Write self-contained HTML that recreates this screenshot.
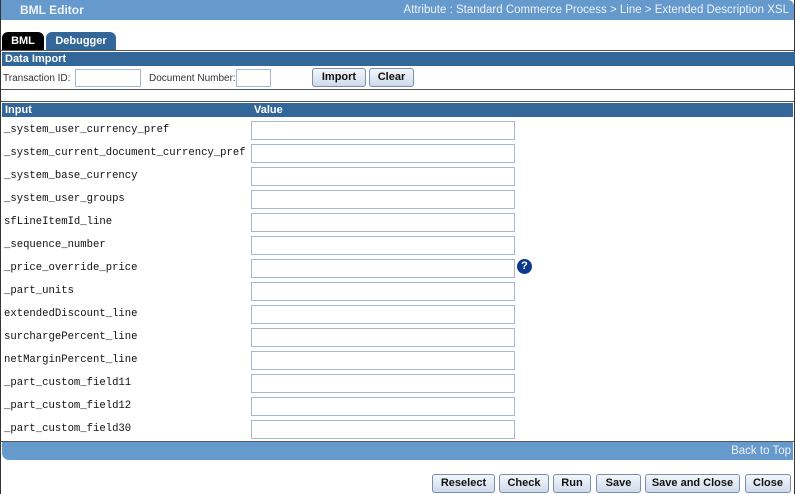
<!DOCTYPE html>
<html><head><style>
body{margin:0;width:795px;height:494px;position:relative;background:#fff;font-family:"Liberation Sans",sans-serif;overflow:hidden}
.a{position:absolute}
.bar{background:#336699;color:#fff;font-weight:bold;font-size:11px;line-height:14px}
.inp{position:absolute;border:1px solid #a5b8cf;background:#fff;box-sizing:border-box}
.lbl{position:absolute;left:4px;font-family:"Liberation Mono",monospace;font-size:10.6px;color:#111}
.btn{position:absolute;top:474px;height:19px;border:1px solid #7a8fb0;border-radius:3px;background:linear-gradient(#f4f7fc,#cfdaea);font-weight:bold;font-size:11px;line-height:17px;text-align:center;box-sizing:border-box;color:#111}
.sm{font-size:10px;color:#333}
</style></head><body>
<div class="a" style="left:0;top:0;width:795px;height:494px;border-left:1px solid #333;border-right:1px solid #333;box-sizing:border-box"></div>
<div class="a" style="left:1px;top:0;width:793px;height:20px;background:#6699cc;border-top-right-radius:6px"></div>
<div class="a" style="left:20px;top:3px;color:#f0f4fa;font-weight:bold;font-size:12px">BML Editor</div>
<div class="a" style="right:6px;top:4px;color:#eef3fa;font-size:11.5px">Attribute : Standard Commerce Process &gt; Line &gt; Extended Description XSL</div>
<div class="a" style="left:2px;top:32px;width:42px;height:19px;background:#000;border-radius:6px 6px 0 0;color:#fff;font-weight:bold;font-size:11px;line-height:19px;text-align:center">BML</div>
<div class="a" style="left:46px;top:32px;width:70px;height:19px;background:#336699;border-radius:6px 6px 0 0;color:#fff;font-weight:bold;font-size:11px;line-height:19px;text-align:center">Debugger</div>
<div class="a" style="left:1px;top:50px;width:793px;height:1px;background:#555"></div>
<div class="a bar" style="left:2px;top:52px;width:791px;height:14px;padding-left:3px">Data Import</div>
<div class="a sm" style="left:3px;top:73px">Transaction ID:</div>
<div class="inp" style="left:75px;top:69px;width:66px;height:18px"></div>
<div class="a sm" style="left:149px;top:73px">Document Number:</div>
<div class="inp" style="left:236px;top:69px;width:35px;height:18px"></div>
<div class="btn" style="left:312px;top:68px;width:54px">Import</div>
<div class="btn" style="left:369px;top:68px;width:45px">Clear</div>
<div class="a" style="left:1px;top:89px;width:793px;height:1px;background:#555"></div>
<div class="a" style="left:1px;top:101px;width:793px;height:1px;background:#555"></div>
<div class="a bar" style="left:2px;top:103px;width:246px;height:14px;padding-left:3px">Input</div>
<div class="a bar" style="left:251px;top:103px;width:539px;height:14px;padding-left:3px">Value</div>
<div class="lbl" style="top:124px">_system_user_currency_pref</div>
<div class="lbl" style="top:147px">_system_current_document_currency_pref</div>
<div class="lbl" style="top:170px">_system_base_currency</div>
<div class="lbl" style="top:193px">_system_user_groups</div>
<div class="lbl" style="top:216px">sfLineItemId_line</div>
<div class="lbl" style="top:239px">_sequence_number</div>
<div class="lbl" style="top:262px">_price_override_price</div>
<div class="lbl" style="top:285px">_part_units</div>
<div class="lbl" style="top:308px">extendedDiscount_line</div>
<div class="lbl" style="top:331px">surchargePercent_line</div>
<div class="lbl" style="top:354px">netMarginPercent_line</div>
<div class="lbl" style="top:377px">_part_custom_field11</div>
<div class="lbl" style="top:400px">_part_custom_field12</div>
<div class="lbl" style="top:423px">_part_custom_field30</div>
<div class="inp" style="left:251px;top:121px;width:264px;height:19px"></div>
<div class="inp" style="left:251px;top:144px;width:264px;height:19px"></div>
<div class="inp" style="left:251px;top:167px;width:264px;height:19px"></div>
<div class="inp" style="left:251px;top:190px;width:264px;height:19px"></div>
<div class="inp" style="left:251px;top:213px;width:264px;height:19px"></div>
<div class="inp" style="left:251px;top:236px;width:264px;height:19px"></div>
<div class="inp" style="left:251px;top:259px;width:264px;height:19px"></div>
<div class="inp" style="left:251px;top:282px;width:264px;height:19px"></div>
<div class="inp" style="left:251px;top:305px;width:264px;height:19px"></div>
<div class="inp" style="left:251px;top:328px;width:264px;height:19px"></div>
<div class="inp" style="left:251px;top:351px;width:264px;height:19px"></div>
<div class="inp" style="left:251px;top:374px;width:264px;height:19px"></div>
<div class="inp" style="left:251px;top:397px;width:264px;height:19px"></div>
<div class="inp" style="left:251px;top:420px;width:264px;height:19px"></div>
<div class="a" style="left:517px;top:259px;width:15px;height:15px;border-radius:50%;background:#0d3a8c;color:#fff;font-weight:bold;font-size:11px;line-height:15px;text-align:center">?</div>
<div class="a" style="left:1px;top:441px;width:793px;height:1px;background:#555"></div>
<div class="a" style="left:2px;top:442px;width:791px;height:18px;background:#6699cc;border-bottom-left-radius:7px"></div>
<div class="a" style="right:4px;top:445px;color:#eef3fa;font-size:11.5px">Back to Top</div>
<div class="btn" style="left:432px;width:63px">Reselect</div>
<div class="btn" style="left:499px;width:50px">Check</div>
<div class="btn" style="left:553px;width:38px">Run</div>
<div class="btn" style="left:596px;width:45px">Save</div>
<div class="btn" style="left:645px;width:95px">Save and Close</div>
<div class="btn" style="left:745px;width:46px">Close</div>
</body></html>
